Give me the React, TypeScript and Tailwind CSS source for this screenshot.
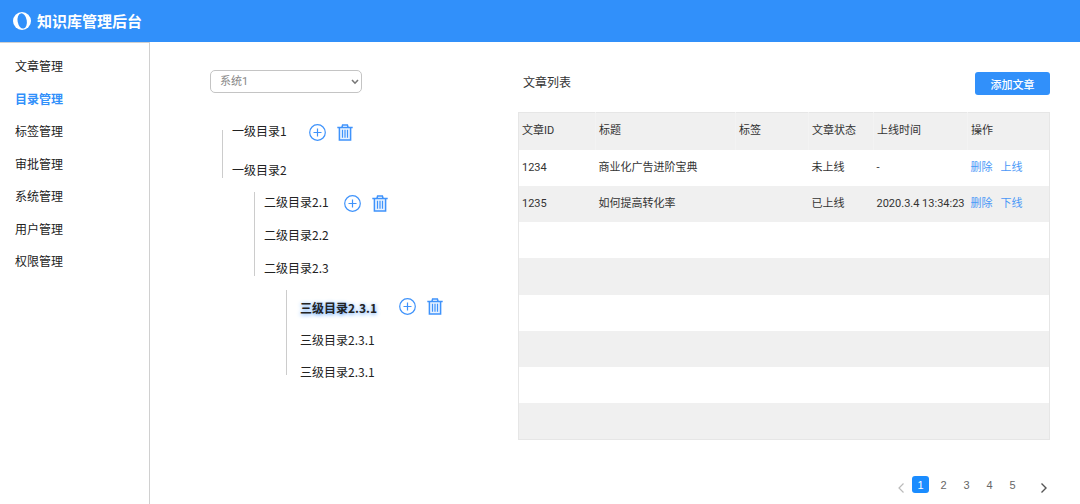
const menuItems = [
  { id: "article", label: "文章管理" },
  { id: "catalog", label: "目录管理" },
  { id: "tag", label: "标签管理" },
  { id: "review", label: "审批管理" },
  { id: "system", label: "系统管理" },
  { id: "user", label: "用户管理" },
  { id: "permission", label: "权限管理" },
];

const articles = [
  { id: "1234", title: "商业化广告进阶宝典", tag: "", status: "未上线", time: "-", action: "上线" },
  { id: "1235", title: "如何提高转化率", tag: "", status: "已上线", time: "2020.3.4 13:34:23", action: "下线" },
];

const columns = ["文章ID", "标题", "标签", "文章状态", "上线时间", "操作"];
const emptyRows = [1, 2, 3, 4, 5, 6];
const pages = [1, 2, 3, 4, 5];

const Logo = () => (
  <svg className="h-[18px] w-[18px]" viewBox="0 0 18 18" aria-hidden="true">
    <circle cx="9" cy="9" r="9" fill="#fff" />
    <ellipse cx="9.2" cy="9" rx="4.6" ry="7.7" fill="#3190fa" transform="rotate(-10 9 9)" />
  </svg>
);

const NodeActions = () => (
  <div className="flex items-center gap-[11px] text-[#3f93fb]">
    <button type="button" aria-label="添加目录">
      <svg className="block h-[17px] w-[17px]" viewBox="0 0 17 17" fill="none" stroke="currentColor" aria-hidden="true">
        <circle cx="8.5" cy="8.5" r="7.8" strokeWidth="1.2" />
        <path d="M8.5 4.5v8M4.500 8.5h8" strokeWidth="1.2" />
      </svg>
    </button>
    <button type="button" aria-label="删除目录">
      <svg className="block h-[17px] w-4" viewBox="0 0 16 17" fill="none" stroke="currentColor" aria-hidden="true">
        <path d="M2.4 3.500v12.500h11.200V3.500" fill="#e9f3ff" strokeWidth="1.500" />
        <path d="M0.300 3.500h15.400" strokeWidth="1.500" />
        <path d="M5 3.300l.6-2.200h4.800l.6 2.200" strokeWidth="1.500" />
        <path d="M5.500 5.800v8M8 5.800v8M10.500 5.800v8" strokeWidth="1.200" />
      </svg>
    </button>
  </div>
);

const CatalogTree = () => (
  <div className="mt-7 ml-3 text-xs leading-5 text-[#222]">
    {/* Level 1 */}
    <div className="flex gap-[9px]">
      <div className="mt-[9px] mb-[2px] w-px bg-[#ccc]" />
      <ul className="flex flex-col gap-[19px]">
        <li className="flex h-5 items-end gap-[22px]">
          一级目录1
          <NodeActions />
        </li>
        <li className="h-5">一级目录2</li>
      </ul>
    </div>

    {/* Level 2 */}
    <div className="mt-3 ml-8 flex gap-[9px]">
      <div className="mb-[2px] w-px bg-[#ccc]" />
      <ul className="flex flex-col gap-[13px]">
        <li className="flex h-5 items-end gap-[15px]">
          二级目录2.1
          <NodeActions />
        </li>
        <li className="h-5">二级目录2.2</li>
        <li className="h-5">二级目录2.3</li>
      </ul>
    </div>

    {/* Level 3 */}
    <div className="mt-3 ml-16 flex gap-[13px]">
      <div className="mb-[7px] w-px bg-[#ccc]" />
      <ul className="flex flex-col gap-3 pt-2">
        <li className="flex h-5 items-start gap-[22px]">
          <strong className="font-bold [text-shadow:0_1px_4px_#3f93fb]">三级目录2.3.1</strong>
          <NodeActions />
        </li>
        <li className="h-5">三级目录2.3.1</li>
        <li className="h-5">三级目录2.3.1</li>
      </ul>
    </div>
  </div>
);

const ArticleTable = () => (
  <table className="h-[328px] w-full table-fixed border-collapse border border-[#e6e6e6] text-left font-['Roboto','Noto_Sans_CJK_SC',sans-serif] text-[11px] leading-4 text-[#333]">
    <colgroup>
      <col className="w-[77px]" />
      <col />
      <col className="w-[73px]" />
      <col className="w-[65px]" />
      <col className="w-[94px]" />
      <col className="w-[82px]" />
    </colgroup>
    <thead>
      <tr className="h-[37px] bg-[#f0f0f0]">
        {columns.map((column) => (
          <th key={column} className="border-r border-[#f3f3f3] px-[3px] font-normal last:border-[#e6e6e6]">
            {column}
          </th>
        ))}
      </tr>
    </thead>
    <tbody>
      {articles.map((article) => (
        <tr key={article.id} className="h-9 even:bg-[#f0f0f0]">
          <td className="px-[3px]">{article.id}</td>
          <td className="px-[3px]">{article.title}</td>
          <td className="px-[3px]">{article.tag}</td>
          <td className="px-[3px]">{article.status}</td>
          <td className="px-[3px] whitespace-nowrap">{article.time}</td>
          <td className="px-[3px]">
            <div className="flex gap-2 text-[#4a98f7]">
              <a href="#delete">删除</a>
              <a href="#toggle">{article.action}</a>
            </div>
          </td>
        </tr>
      ))}
      {emptyRows.map((row) => (
        <tr key={row} className="h-9 even:bg-[#f0f0f0]">
          {columns.map((column) => (
            <td key={column} />
          ))}
        </tr>
      ))}
    </tbody>
  </table>
);

const Pagination = () => (
  <nav aria-label="分页" className="mt-9 mr-[3px] flex items-end justify-end font-['Liberation_Sans',sans-serif] text-[11px] leading-4 text-[#666]">
    <button type="button" aria-label="上一页" className="mr-2 text-[#bbb]">
      <svg className="h-[10px] w-[6px]" viewBox="0 0 6 10" fill="none" stroke="currentColor" strokeWidth="1.2" aria-hidden="true">
        <path d="M5.5 0.5 1 5l4.500 4.500" />
      </svg>
    </button>
    <div className="flex gap-[6px]">
      {pages.map((page) => (
        <button
          key={page}
          type="button"
          aria-current={page === 1 ? "page" : undefined}
          className="h-[17px] w-[17px] rounded-[3px] aria-[current=page]:bg-[#1a8cff] aria-[current=page]:text-white"
        >
          {page}
        </button>
      ))}
    </div>
    <button type="button" aria-label="下一页" className="ml-5 text-[#555]">
      <svg className="h-[10px] w-[6px]" viewBox="0 0 6 10" fill="none" stroke="currentColor" strokeWidth="1.4" aria-hidden="true">
        <path d="M0.5 0.5 5 5 0.5 9.5" />
      </svg>
    </button>
  </nav>
);

const App = () => {
  return (
    <div className="flex min-h-screen flex-col bg-white font-['Noto_Sans_CJK_SC',sans-serif]">
      {/* Header */}
      <header className="flex h-[42px] items-center gap-[6px] bg-[#3190fa] pl-[13px] text-white">
        <Logo />
        <h1 className="text-[15px] leading-5 font-bold">知识库管理后台</h1>
      </header>

      <div className="flex flex-1">
        {/* Sidebar */}
        <aside className="w-[150px] shrink-0 border-t border-r border-[#d0d0d0] pt-[13px] pl-[15px]">
          <nav className="flex h-[215px] flex-col justify-between text-xs leading-5 text-[#222]">
            {menuItems.map((item) => (
              <a
                key={item.id}
                href={`#${item.id}`}
                aria-current={item.id === "catalog" ? "page" : undefined}
                className="aria-[current=page]:font-bold aria-[current=page]:text-[#3190fa]"
              >
                {item.label}
              </a>
            ))}
          </nav>
        </aside>

        <main className="flex flex-1 pt-7 pr-[30px] pl-[60px]">
          {/* Catalog */}
          <section className="w-[308px] shrink-0">
            <div className="relative w-[152px]">
              <select
                aria-label="系统"
                className="block h-[23px] w-full appearance-none rounded-[5px] border border-[#c4c4c4] bg-white pl-[9px] font-['Roboto','Noto_Sans_CJK_SC',sans-serif] text-[11px] leading-4 text-[#888]"
              >
                <option>系统1</option>
              </select>
              <svg
                className="pointer-events-none absolute top-[9px] right-[3px] h-[6px] w-2"
                viewBox="0 0 8 6"
                fill="none"
                stroke="#777"
                strokeWidth="1.6"
                aria-hidden="true"
              >
                <path d="M1 1l3 3.200L7 1" />
              </svg>
            </div>
            <CatalogTree />
          </section>

          {/* Articles */}
          <section className="min-w-0 flex-1">
            <div className="mb-[17px] flex items-start justify-between pt-[2px]">
              <h2 className="pl-[5px] text-xs leading-5 text-[#333]">文章列表</h2>
              <button type="button" className="h-[23px] w-[75px] rounded-[3px] bg-[#3190fa] text-[11px] leading-4 font-medium text-white">
                添加文章
              </button>
            </div>
            <ArticleTable />
            <Pagination />
          </section>
        </main>
      </div>
    </div>
  );
};

export default App;
